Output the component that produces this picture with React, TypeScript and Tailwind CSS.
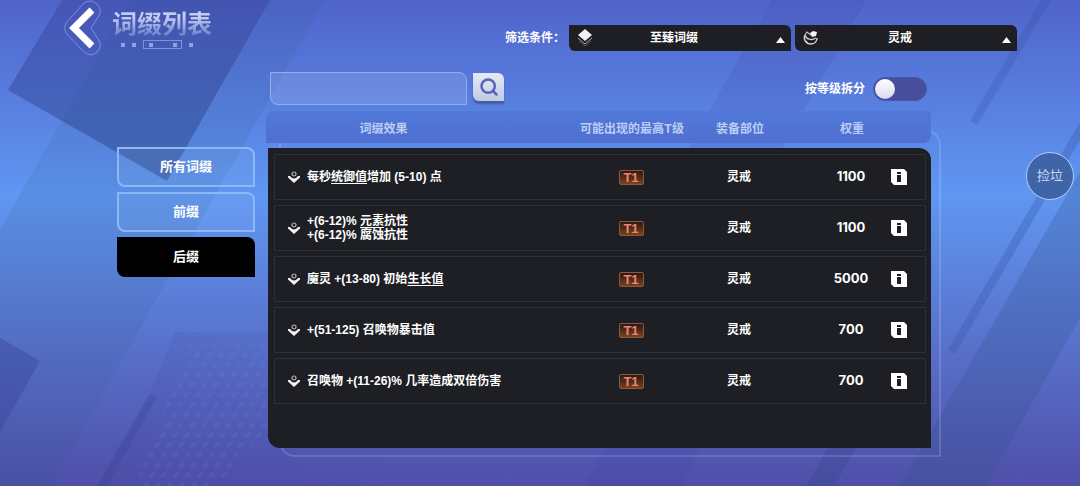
import { Search } from "lucide-react";

interface EffectPart {
  text: string;
  underline?: boolean;
}

interface Affix {
  id: number;
  lines: EffectPart[][];
  tier: string;
  slot: string;
  weight: number;
}

const affixes: Affix[] = [
  {
    id: 1,
    lines: [
      [{ text: "每秒" }, { text: "统御值", underline: true }, { text: "增加 (5-10) 点" }],
    ],
    tier: "T1",
    slot: "灵戒",
    weight: 1100,
  },
  {
    id: 2,
    lines: [
      [{ text: "+(6-12)% " }, { text: "元素", underline: true }, { text: "抗性" }],
      [{ text: "+(6-12)% 腐蚀抗性" }],
    ],
    tier: "T1",
    slot: "灵戒",
    weight: 1100,
  },
  {
    id: 3,
    lines: [[{ text: "魔灵 +(13-80) 初始" }, { text: "生长值", underline: true }]],
    tier: "T1",
    slot: "灵戒",
    weight: 5000,
  },
  {
    id: 4,
    lines: [[{ text: "+(51-125) 召唤物暴击值" }]],
    tier: "T1",
    slot: "灵戒",
    weight: 700,
  },
  {
    id: 5,
    lines: [[{ text: "召唤物 +(11-26)% 几率造成双倍伤害" }]],
    tier: "T1",
    slot: "灵戒",
    weight: 700,
  },
];

const tabs = ["所有词缀", "前缀", "后缀"];

function Backdrop() {
  return (
    <svg
      className="absolute inset-0 -z-10 h-full w-full"
      viewBox="0 0 1080 486"
      preserveAspectRatio="none"
      aria-hidden="true"
    >
      <defs>
        <pattern id="dots" width="12" height="10" patternUnits="userSpaceOnUse" patternTransform="skewX(-30)">
          <circle cx="6" cy="5" r="2.5" fill="#7f97ee" fillOpacity="0.12" />
        </pattern>
        <linearGradient id="shade" x1="0" y1="0" x2="0" y2="1">
          <stop offset="0" stopColor="#2c2f86" stopOpacity="0.28" />
          <stop offset="1" stopColor="#233a78" stopOpacity="0.45" />
        </linearGradient>
        <linearGradient id="fade" x1="0" y1="0" x2="1" y2="0">
          <stop offset="0" stopColor="#3d419c" stopOpacity="0.18" />
          <stop offset="1" stopColor="#3d419c" stopOpacity="0" />
        </linearGradient>
      </defs>
      <polygon points="130,0 325,0 51,486 0,486 0,230" fill="#2c5a8c" fillOpacity="0.13" />
      <polygon points="62,0 270,0 167,181 8,90" fill="url(#shade)" />
      <polygon points="0,338 40,361 0,432" fill="#343c94" fillOpacity="0.35" />
      <polygon points="175,332 400,332 400,486 97,486 150,393" fill="url(#fade)" />
      <polygon points="150,394 157,397 107,486 97,486" fill="#3a3f94" fillOpacity="0.28" />
      <polygon points="190,345 266,345 266,430 215,486 135,486" fill="url(#dots)" />
      <polygon points="772,0 866,0 708,280 614,280" fill="#41409f" fillOpacity="0.14" />
      <polygon points="605,448 700,448 682,486 585,486" fill="#41409f" fillOpacity="0.16" />
      <polygon points="828,448 856,448 834,486 806,486" fill="#38448c" fillOpacity="0.32" />
      <polygon points="1041,0 1051,0 977,125 970,121" fill="#33509f" fillOpacity="0.25" />
      <polygon points="1080,122 1080,140 955,354 948,350" fill="#33509f" fillOpacity="0.28" />
      <polygon points="1080,172 1080,318 985,486 900,486" fill="#33508c" fillOpacity="0.26" />
    </svg>
  );
}

function BackArrow() {
  return (
    <svg width="38" height="56" viewBox="0 0 38 56" fill="none" aria-hidden="true">
      <path
        d="M19 4 Q26 -2 33 4 Q39 11 34 17 L27 28 L34 39 Q39 46 33 52 Q26 58 19 51 L2 33 Q-1 28 2 23 Z"
        stroke="#93a5ea"
        strokeOpacity="0.7"
      />
      <path d="M28 10 L10 28 L28 46" stroke="#fff" strokeWidth="7" />
    </svg>
  );
}

function TitleMarks() {
  return (
    <svg width="76" height="10" viewBox="0 0 76 10" aria-hidden="true">
      <g fill="#8fa2df">
        <rect x="1" y="3" width="4" height="4" />
        <rect x="12" y="3" width="4" height="4" />
        <rect x="29" y="3" width="4" height="4" />
        <rect x="53" y="3" width="4" height="4" />
        <rect x="69" y="3" width="4" height="4" />
      </g>
      <rect x="23.5" y="0.5" width="38" height="8" fill="none" stroke="#8fa2df" strokeOpacity="0.8" />
    </svg>
  );
}

function LayersIcon() {
  return (
    <svg width="16" height="18" viewBox="0 0 16 18" fill="none" aria-hidden="true">
      <path d="M8 0 L15 6 L8 12 L1 6 Z" fill="#f1f1f3" />
      <path d="M1 9 L8 15 L15 9" stroke="#a3a4aa" />
      <path d="M2 12 L8 17 L14 12" stroke="#5b5c62" />
    </svg>
  );
}

function RingIcon() {
  return (
    <svg width="16" height="16" viewBox="0 0 16 16" fill="none" aria-hidden="true">
      <path d="M2 5 C0 9 3 14 8 14 C12 14 14 11 14 8" stroke="#d8d8dc" strokeWidth="1.4" />
      <path d="M2 5 C3 9 8 11 13 8" stroke="#c4c5ca" strokeWidth="1.4" />
      <path d="M2 5 L4 2 L8 5" stroke="#c4c5ca" strokeWidth="1.2" />
      <path d="M7 3 L10 1 L14 2 L13 6 L9 7 Z" fill="#f4f4f6" />
    </svg>
  );
}

function AffixIcon() {
  return (
    <svg width="12" height="12" viewBox="0 0 12 12" fill="none" aria-hidden="true">
      <circle cx="6" cy="3" r="2" stroke="#b5b6ba" strokeWidth="1.2" />
      <path d="M0 5 L2 5 Q4 7.500 6 7.500 Q8 7.500 10 5 L12 5 L12 6.500 L6 12 L0 6.500 Z" fill="#f2f2f3" />
    </svg>
  );
}

function InfoIcon() {
  return (
    <svg width="16" height="16" viewBox="0 0 16 16" aria-hidden="true">
      <path d="M0 0 H13 L16 3 V16 H3 L0 13 Z" fill="#fff" />
      <path d="M6 3 H10 V5 H6 Z M6 6 H10 V13 H6 Z" fill="#1e1f24" />
    </svg>
  );
}

interface FilterProps {
  id: string;
  label: string;
  value: string;
  icon: React.ReactNode;
}

function Filter({ id, label, value, icon }: FilterProps) {
  return (
    <div className="relative w-[222px]">
      <select
        id={id}
        aria-label={label}
        defaultValue={value}
        className="block h-[26px] w-full appearance-none rounded-tr-md rounded-bl-md bg-[#1e1f24] pr-9 pl-6 text-xs font-bold text-white [text-align-last:center]"
      >
        <option>{value}</option>
      </select>
      <span className="pointer-events-none absolute inset-y-0 left-2 flex items-center">{icon}</span>
      <svg
        className="pointer-events-none absolute right-[6px] bottom-2"
        width="9"
        height="6"
        viewBox="0 0 9 6"
        aria-hidden="true"
      >
        <path d="M4.500 0 L9 6 H0 Z" fill="#fff" />
      </svg>
    </div>
  );
}

function AffixRow({ affix }: { affix: Affix }) {
  return (
    <tr className="grid h-[46px] grid-cols-[1fr_122px_94px_100px_26px] items-center border border-[#303136] pr-[13px]">
      <td className="flex items-center gap-[7px] pl-[13px] font-['Liberation_Sans','Noto_Sans_CJK_SC',sans-serif] text-xs leading-[14px]">
        <AffixIcon />
        <div>
          {affix.lines.map((line, i) => (
            <p key={i}>
              {line.map((part) => (
                <span
                  key={part.text}
                  className={part.underline ? "underline decoration-1 underline-offset-2" : undefined}
                >
                  {part.text}
                </span>
              ))}
            </p>
          ))}
        </div>
      </td>
      <td className="flex justify-center">
        <span className="flex h-[15px] w-[25px] items-center justify-center rounded-xs border border-[#8a5a3c] bg-linear-to-b from-[#2c1a16] to-[#7a4218] font-['Liberation_Sans',sans-serif] text-[13px] leading-none text-[#ee8377]">
          {affix.tier}
        </span>
      </td>
      <td className="text-center text-xs">{affix.slot}</td>
      <td className="pl-[30px] text-center text-[13px]">{affix.weight}</td>
      <td className="flex justify-center">
        <button type="button" aria-label="详情">
          <InfoIcon />
        </button>
      </td>
    </tr>
  );
}

export default function App() {
  return (
    <div className="relative isolate min-h-screen overflow-hidden bg-linear-to-b from-[#5064ca] via-[#5f97f2] via-40% to-[#4f4fa8] font-['Inter','Noto_Sans_CJK_SC',sans-serif] font-bold text-white">
      <Backdrop />

      {/* 标题与筛选 */}
      <header className="flex h-14 items-start justify-between pr-[63px] pl-16">
        <div className="flex items-start gap-[10px]">
          <button type="button" aria-label="返回">
            <BackArrow />
          </button>
          <div className="flex flex-col pt-2">
            <h1 className="bg-linear-to-b from-[#c3cdf1] from-30% to-[#6072c4] to-95% bg-clip-text text-[25px] leading-8 text-transparent">
              词缀列表
            </h1>
            <div className="pl-2">
              <TitleMarks />
            </div>
          </div>
        </div>
        <div className="flex items-center gap-1 pt-[25px]">
          <span className="text-xs">筛选条件：</span>
          <Filter id="kind" label="词缀类型" value="至臻词缀" icon={<LayersIcon />} />
          <Filter id="slot" label="装备部位" value="灵戒" icon={<RingIcon />} />
        </div>
      </header>

      <main className="flex items-start gap-[11px] pr-[149px] pl-[117px]">
        {/* 词缀分类 */}
        <nav className="mt-[91px] flex w-[138px] shrink-0 flex-col gap-[5px]">
          {tabs.map((tab) => (
            <button
              key={tab}
              type="button"
              className={
                tab === "后缀"
                  ? "h-10 rounded-tr-lg rounded-bl-lg bg-black text-[13px]"
                  : "h-10 rounded-tr-lg rounded-bl-lg border-2 border-[#8db8f8] bg-white/5 text-[13px]"
              }
            >
              {tab}
            </button>
          ))}
        </nav>

        <section className="mt-4 min-w-0 flex-1">
          {/* 搜索栏 */}
          <div className="flex h-[33px] items-center justify-between pr-1 pl-1">
            <div className="flex items-start gap-[6px]">
              <input
                type="text"
                aria-label="搜索词缀"
                className="h-[33px] w-[197px] rounded-tr-lg rounded-bl-lg border border-[#93adf0] bg-white/12 px-2 text-xs outline-none"
              />
              <button
                type="button"
                aria-label="搜索"
                className="mt-px flex h-7 w-[31px] items-center justify-center rounded-tr-md rounded-bl-md bg-linear-to-b from-[#e6eaf6] to-[#bfcbe4] text-[#5a62b8] shadow-[0_3px_2px_#41609f]"
              >
                <Search size={20} strokeWidth={3} />
              </button>
            </div>
            <label className="flex items-center gap-2 text-xs">
              按等级拆分
              <input type="checkbox" role="switch" className="peer sr-only" />
              <span className="flex h-6 w-[54px] items-center rounded-full border border-[#4657ab] bg-[#484e9b] px-[1px] peer-checked:justify-end">
                <span className="size-5 rounded-full bg-linear-to-b from-white to-[#d9dbea]" />
              </span>
            </label>
          </div>

          {/* 词缀表格 */}
          <div className="relative mt-[6px]">
            <div className="absolute top-[18px] -right-[10px] -bottom-[9px] left-[13px] -z-10 rounded-tr-2xl rounded-bl-2xl border-2 border-white/15" />
            <table className="block">
              <thead className="block rounded-tl-lg rounded-br-lg bg-linear-to-b from-[#5079d9] to-[#506fd0] text-[#bccdf6]">
                <tr className="grid h-8 grid-cols-[1fr_122px_94px_100px_26px] items-center pt-[3px] pr-[18px] pl-2 text-xs">
                  <th className="pr-[78px]">词缀效果</th>
                  <th>可能出现的最高T级</th>
                  <th>装备部位</th>
                  <th className="pl-[30px]">权重</th>
                  <th aria-label="详情" />
                </tr>
              </thead>
              <tbody className="mt-[5px] ml-[2px] flex flex-col gap-[5px] rounded-tr-xl rounded-bl-xl bg-[#1e1f24] pt-[6px] pr-[5px] pb-11 pl-[6px]">
                {affixes.map((affix) => (
                  <AffixRow key={affix.id} affix={affix} />
                ))}
              </tbody>
            </table>
          </div>
        </section>
      </main>

      {/* 悬浮按钮 */}
      <button
        type="button"
        className="absolute top-[152px] right-[6px] size-12 rounded-full border border-[#b4cdf8] bg-[#3f65a8] text-[13px] font-normal text-[#c9d8f2]"
      >
        捡垃
      </button>
    </div>
  );
}
